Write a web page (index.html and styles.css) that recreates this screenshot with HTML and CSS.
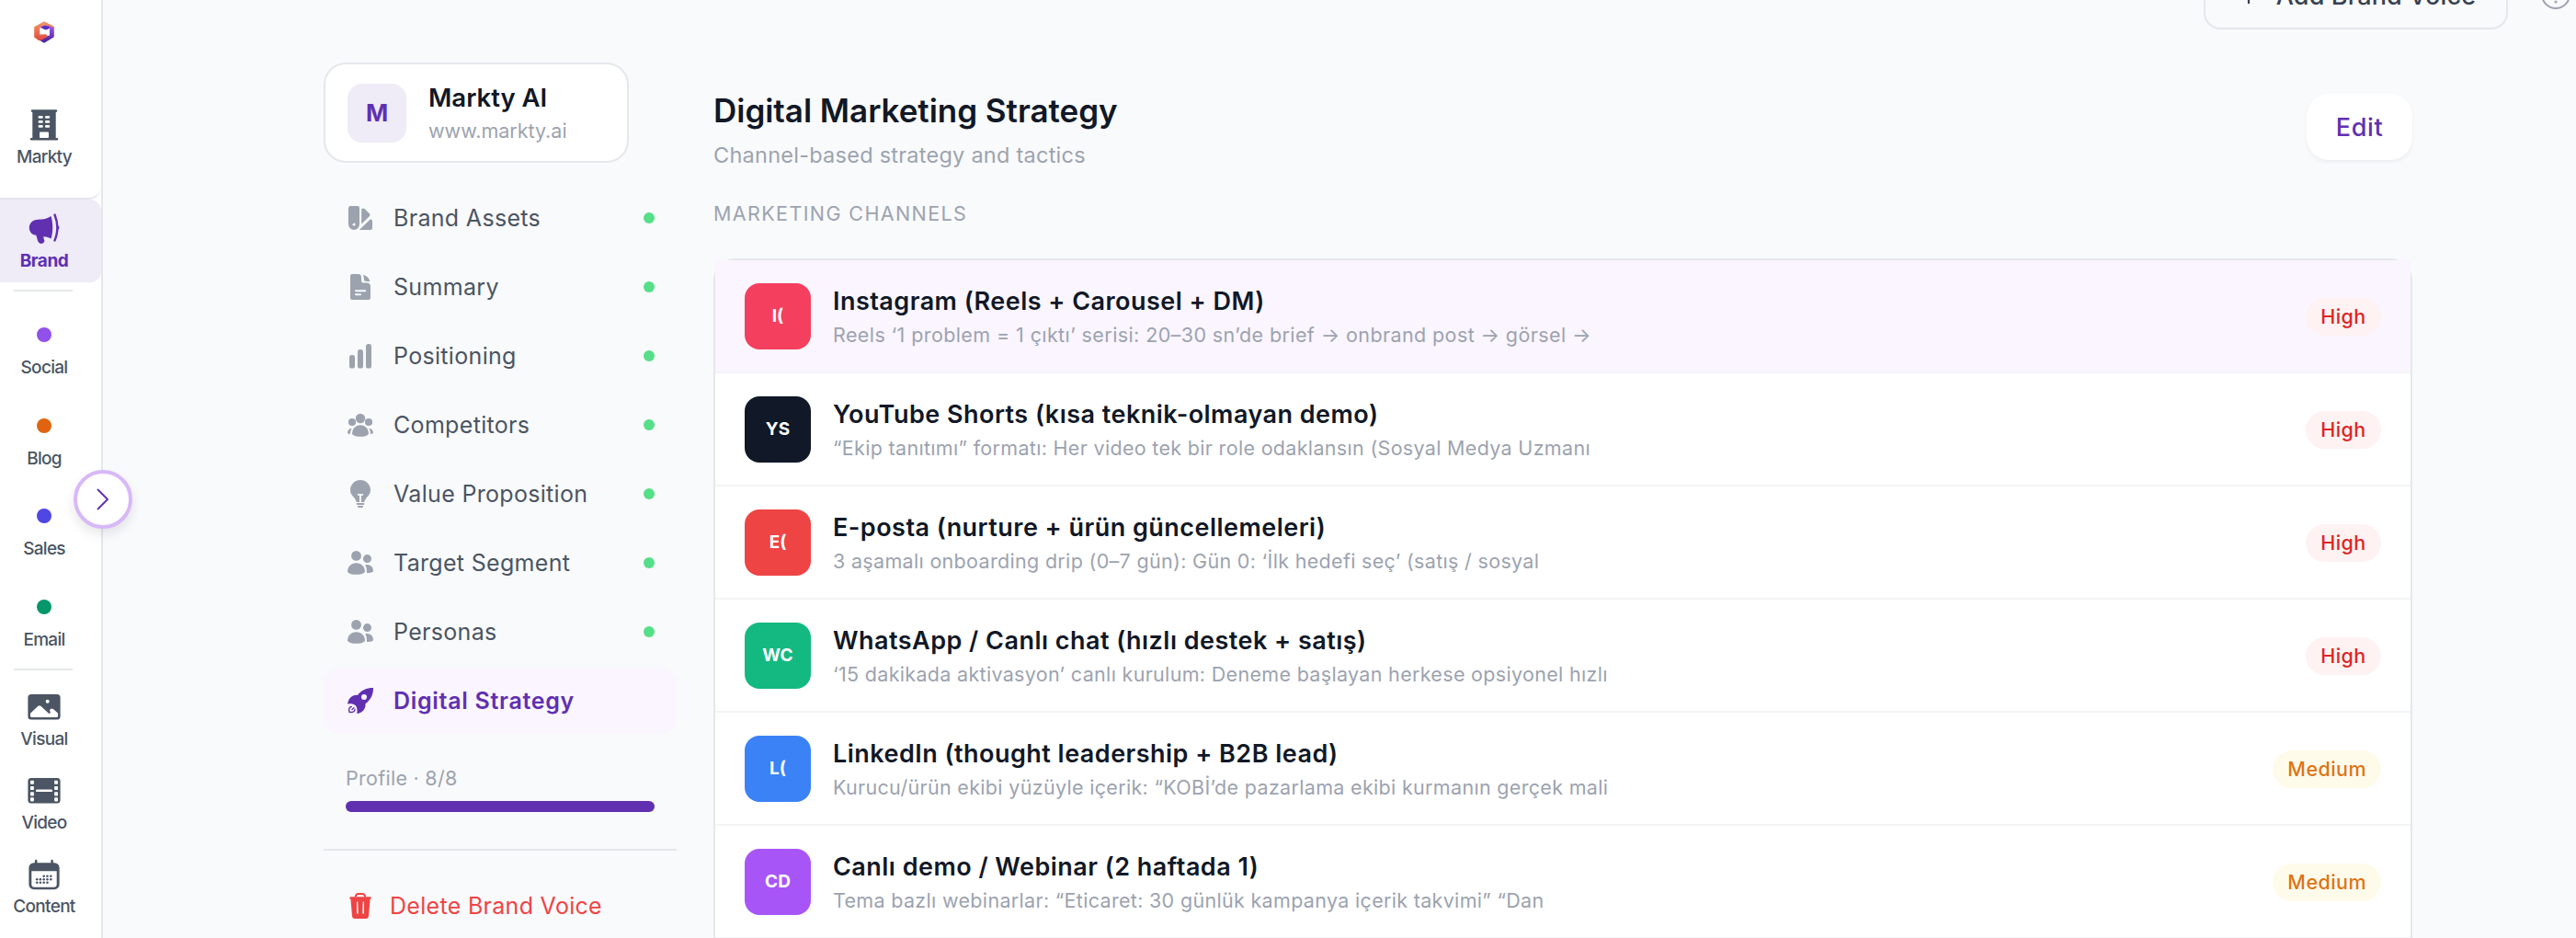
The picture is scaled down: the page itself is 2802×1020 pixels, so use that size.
FILE: index.html
```
<!DOCTYPE html>
<html lang="en">
<head>
<meta charset="utf-8">
<title>Markty – Digital Marketing Strategy</title>
<link rel="stylesheet" href="styles.css">
</head>
<body>
<div class="app">
  <nav class="rail">
    <div class="rail-head">
      <svg class="logo" width="24" height="26" viewBox="0 0 24 26">
        <defs>
          <linearGradient id="warm" x1="0" y1="0" x2="0" y2="1"><stop offset="0" stop-color="#ee9a6a"/><stop offset="1" stop-color="#e2493f"/></linearGradient>
          <linearGradient id="cool" x1="0" y1="0" x2="0" y2="1"><stop offset="0" stop-color="#a45cf5"/><stop offset="1" stop-color="#43208f"/></linearGradient>
        </defs>
        <path d="M20 5.5L22.8 7.2V18.2L12 24.8L6.5 21.5L12 18.5L17.5 16V9L12 10L7.5 7.500Z" fill="url(#cool)"/>
        <path d="M7 8.500L13 11L17.800 8.500V17L12.500 15L7 17.500Z" fill="#fff"/>
        <path d="M12 1.200L21.800 6.200V8L18.500 7L12 5.500L7.300 8.500V15.500L14 15.200L16 17.500L9.500 21.500L6 22L1.200 18.500V7.200Z" fill="url(#warm)"/>
        <path d="M8 7.500L12.500 5.600L18.500 7L16.500 9.800L13.500 10.500Z" fill="#5b2fc0"/>
      </svg>
      <a class="rail-item">
        <svg width="32" height="36" viewBox="0 0 32 36"><path fill="currentColor" fill-rule="evenodd" d="M3 1.300H29a1 1 0 0 1 0 2.600H28.700V31.900H30a1.200 1.200 0 0 1 0 2.600H2a1.200 1.200 0 0 1 0-2.600H3.300V3.900H3a1 1 0 0 1 0-2.600ZM11 26.500V31a1 1 0 0 0 1 1H20a1 1 0 0 0 1-1V26.500a1 1 0 0 0-1-1H12a1 1 0 0 0-1 1Z"/><g fill="#fff"><rect x="9.600" y="8" width="5.200" height="2.700" rx="1.300"/><rect x="17" y="8" width="5.200" height="2.700" rx="1.300"/><rect x="9.600" y="13" width="5.200" height="2.700" rx="1.300"/><rect x="17" y="13" width="5.200" height="2.700" rx="1.300"/><rect x="9.600" y="18" width="5.200" height="2.700" rx="1.300"/><rect x="17" y="18" width="5.200" height="2.700" rx="1.300"/></g></svg>
        <span>Markty</span>
      </a>
    </div>
    <a class="rail-item rail-active">
      <svg width="36" height="36" viewBox="0 0 36 36"><path fill="currentColor" d="M25.500 4C21.500 7 17 7.700 11.500 7.700C5.500 7.700 1.800 12 1.800 16.500C1.800 21 4.800 24.300 9.300 24.800L11 30.500C11.900 34.800 17.200 35 18.300 31.500C18.700 29.800 17 28.800 17.500 26.200C20.500 26.200 23.500 27.200 25.600 28.600C27.800 21 27.800 11 25.500 4Z"/><path d="M29.500 2.500C33.200 11.500 33.200 21.500 29.500 30.500" fill="none" stroke="currentColor" stroke-width="2.400" stroke-linecap="round"/><path d="M32 13.500Q34.500 14.300 34.500 16.500T32 19.500Z" fill="currentColor"/></svg>
      <span>Brand</span>
    </a>
    <hr class="rail-rule">
    <div class="rail-dots">
      <a class="rail-item"><i class="dot dot-social"></i><span>Social</span></a>
      <a class="rail-item"><i class="dot dot-blog"></i><span>Blog</span></a>
      <a class="rail-item"><i class="dot dot-sales"></i><span>Sales</span></a>
      <a class="rail-item"><i class="dot dot-email"></i><span>Email</span></a>
    </div>
    <hr class="rail-rule">
    <div class="rail-tools">
      <a class="rail-item">
        <svg width="36" height="30" viewBox="0 0 36 30"><rect x=".4" y="1" width="35.200" height="27.600" rx="3.500" fill="currentColor"/><path fill="#fff" d="M3 24.500V21.800L11.400 13.800Q12.900 12.500 14.400 13.800L23 21.700Q25.200 22.400 24.800 20L23.900 18.800Q25.300 15.300 28.200 17.300L33 21.600V24.500Q33 26 31.500 26H4.500Q3 26 3 24.500Z"/><circle cx="21.700" cy="8.700" r="2" fill="#fff"/></svg>
        <span>Visual</span>
      </a>
      <a class="rail-item">
        <svg width="36" height="30" viewBox="0 0 36 30"><rect x=".4" y="1" width="35.200" height="27.600" rx="3.500" fill="currentColor"/><g fill="#fff"><rect x="3" y="3.700" width="3.900" height="4.100" rx=".8"/><rect x="3" y="10" width="3.900" height="4.100" rx=".8"/><rect x="3" y="16.300" width="3.900" height="4.100" rx=".8"/><rect x="3" y="22.300" width="3.900" height="4.100" rx=".8"/><rect x="29.100" y="3.700" width="3.900" height="4.100" rx=".8"/><rect x="29.100" y="10" width="3.900" height="4.100" rx=".8"/><rect x="29.100" y="16.300" width="3.900" height="4.100" rx=".8"/><rect x="29.100" y="22.300" width="3.900" height="4.100" rx=".8"/><rect x="9" y="13.600" width="18" height="2.500" rx="1.200"/></g></svg>
        <span>Video</span>
      </a>
      <a class="rail-item rail-content">
        <svg width="36" height="35" viewBox="0 0 36 35"><rect x="1.400" y="4.200" width="33.200" height="29" rx="5.500" fill="currentColor"/><path d="M9.200 2V6M26.600 2V6" stroke="currentColor" stroke-width="2.500" stroke-linecap="round"/><path fill="#fff" d="M4.300 13.300H31.700V27.500Q31.700 30.700 28.500 30.700H7.500Q4.300 30.700 4.300 27.500Z"/><g fill="currentColor"><circle cx="17.700" cy="18.700" r="1.300"/><circle cx="21.500" cy="18.700" r="1.300"/><circle cx="25.300" cy="18.700" r="1.300"/><circle cx="10.200" cy="22.200" r="1.300"/><circle cx="13.900" cy="22.200" r="1.300"/><circle cx="17.700" cy="22.200" r="1.300"/><circle cx="21.500" cy="22.200" r="1.300"/><circle cx="25.300" cy="22.200" r="1.300"/><circle cx="10.200" cy="25.800" r="1.300"/><circle cx="13.900" cy="25.800" r="1.300"/><circle cx="17.700" cy="25.800" r="1.300"/><circle cx="21.500" cy="25.800" r="1.300"/></g></svg>
        <span>Content</span>
      </a>
    </div>
    <button class="rail-toggle" aria-label="Expand menu"><svg width="14" height="24" viewBox="0 0 14 24"><path d="M1.500 1.500L12 12L1.500 22.500" fill="none" stroke="#6030b1" stroke-width="1.900" stroke-linecap="round" stroke-linejoin="round"/></svg></button>
  </nav>

  <div class="page">
    <header class="topbar">
      <button class="add-voice"><svg width="16" height="20" viewBox="0 0 16 20"><path d="M8 1V19M-1 10H17" stroke="currentColor" stroke-width="2.200"/></svg>Add Brand Voice</button>
      <svg class="help" width="32" height="32" viewBox="0 0 32 32" fill="none" stroke="#9ca3af" stroke-width="2"><circle cx="16" cy="16" r="15"/><path d="M12 12.500Q12 8.500 16 8.500T20 12.500C20 15.500 16 15 16 18.500"/><circle cx="16" cy="24" r=".6"/></svg>
    </header>

    <div class="columns">
      <aside class="side">
        <div class="brand-card">
          <div class="brand-letter">M</div>
          <div class="brand-text"><strong>Markty AI</strong><span>www.markty.ai</span></div>
        </div>
        <ul class="menu">
          <li><svg viewBox="0 0 28 28"><path fill-rule="evenodd" d="M3 1H11Q13 1 13 3V21A6 6 0 0 1 1 21V3Q1 1 3 1ZM7 19.200L7.800 20.300L9.100 20.800L8 21.700L7.500 23L6.400 22.100L5 22L5.800 20.800Z"/><path d="M15.200 4.600Q17 2.700 18.800 4.300L24 9.400Q25 10.700 24 11.900L15.200 20.800Z"/><path d="M12.800 27L24.500 15.700Q27 15 27 17.500V25Q27 27 25 27Z"/></svg><span>Brand Assets</span></li>
          <li><svg viewBox="0 0 28 28"><path fill-rule="evenodd" d="M5 0H12.500Q15 .5 15 3.500V7Q15 9.600 18 9.600H21Q25 9.800 25 14V26Q25 28 23 28H5Q3 28 3 26V2Q3 0 5 0ZM9 17.200a1 1 0 0 0 0 2H19.200a1 1 0 0 0 0-2ZM9 21.200a1 1 0 0 0 0 2H14a1 1 0 0 0 0-2Z"/><path d="M16.800 1C20.500 1.300 23.500 4.300 24.500 8.200C22 7.500 20.500 8.500 18 7.200C18 5 17.800 2.500 16.800 1Z"/></svg><span>Summary</span></li>
          <li><svg viewBox="0 0 28 28"><rect x="2" y="13" width="6" height="14.500" rx="2.600"/><rect x="11" y="7" width="6" height="20.500" rx="2.600"/><rect x="20" y="1" width="6" height="26.500" rx="2.600"/></svg><span>Positioning</span></li>
          <li><svg viewBox="0 0 28 28"><circle cx="14" cy="7" r="5.200"/><circle cx="5" cy="11" r="4.100"/><circle cx="23" cy="11" r="4.100"/><path d="M5 24C5 18 9 14.200 14 14.200S23 18 23 24C20 27.800 8 27.800 5 24Z"/><path d="M4.500 18C1.200 18 0 20.500 0 23.300L3 24Q3 20.500 4.500 18ZM23.500 18C26.800 18 28 20.500 28 23.300L25 24Q25 20.500 23.500 18Z"/></svg><span>Competitors</span></li>
          <li><svg viewBox="0 0 28 28"><path fill-rule="evenodd" d="M14-1A11 11 0 0 1 25 10C25 16 19.500 17.500 18.300 23H15V15.700H17V14H11V15.700H13V23H9.700C8.500 17.500 3 16 3 10A11 11 0 0 1 14-1Z"/><rect x="9.700" y="23.900" width="8.600" height="2" rx=".8"/><rect x="11" y="27" width="6" height="2" rx=".9"/></svg><span>Value Proposition</span></li>
          <li><svg viewBox="0 0 28 28"><circle cx="9.500" cy="6.400" r="5.400"/><circle cx="21.500" cy="9.600" r="4.500"/><path d="M0 24C0 18 4 14.200 9.500 14.200S19 18 19 24C16 27.800 3 27.800 0 24Z"/><path d="M19.300 16.200C25 15.500 28 18.500 28 23.500Q25.500 25.200 21 25Q21.500 20 19.300 16.200Z"/></svg><span>Target Segment</span></li>
          <li><svg viewBox="0 0 28 28"><circle cx="9.500" cy="6.400" r="5.400"/><circle cx="21.500" cy="9.600" r="4.500"/><path d="M0 24C0 18 4 14.200 9.500 14.200S19 18 19 24C16 27.800 3 27.800 0 24Z"/><path d="M19.300 16.200C25 15.500 28 18.500 28 23.500Q25.500 25.200 21 25Q21.500 20 19.300 16.200Z"/></svg><span>Personas</span></li>
          <li class="current"><svg viewBox="0 0 28 28"><path fill-rule="evenodd" d="M28 0C20.500 0 15 2.500 11 8C5 7 1 12 0 17.500C3 17 6.500 17 8.500 19C10.500 21 10.800 24 10.300 28C15.500 27.500 20 23.500 19.500 17.300C25 13 28 8 28 0ZM18 7a3 3 0 1 0 0 6a3 3 0 1 0 0-6Z"/><path d="M4.300 20.500C1.800 21 1 23.500 2 26.300C5.500 26.800 7.800 26 8 23.500M5 23.500L7 21.800" fill="none" stroke="currentColor" stroke-width="1.400" stroke-linecap="round"/></svg><span>Digital Strategy</span></li>
        </ul>
        <div class="progress">
          <span>Profile · 8/8</span>
          <div class="track"><div class="fill" style="width:100%"></div></div>
        </div>
        <a class="delete"><svg viewBox="0 0 28 28"><path fill-rule="evenodd" d="M3 4.200H25Q26 4.200 25.600 6.500H24.600L23 25Q22.800 28 20 28H8Q5.200 28 5 25L3.400 6.500H2.400Q2 4.200 3 4.200ZM10 9.500V22.500H11.700L11.300 9.500ZM16.700 9.500L16.300 22.500H18V9.500Z"/><path d="M8.700 4.500Q9 1 12 1H16Q19 1 19.300 4.500" fill="none" stroke="currentColor" stroke-width="1.800"/></svg>Delete Brand Voice</a>
      </aside>

      <main class="main">
        <div class="main-head">
          <div><h1>Digital Marketing Strategy</h1><p>Channel-based strategy and tactics</p></div>
          <button class="edit">Edit</button>
        </div>
        <h2>MARKETING CHANNELS</h2>
        <div class="channels">
          <div class="row hover"><div class="avatar rose">I(</div><div class="info"><h3>Instagram (Reels + Carousel + DM)</h3><p>Reels ‘1 problem = 1 çıktı’ serisi: 20–30 sn’de brief → onbrand post → görsel →</p></div><span class="badge high">High</span></div>
          <div class="row"><div class="avatar ink">YS</div><div class="info"><h3>YouTube Shorts (kısa teknik-olmayan demo)</h3><p>“Ekip tanıtımı” formatı: Her video tek bir role odaklansın (Sosyal Medya Uzmanı</p></div><span class="badge high">High</span></div>
          <div class="row"><div class="avatar red">E(</div><div class="info"><h3>E-posta (nurture + ürün güncellemeleri)</h3><p>3 aşamalı onboarding drip (0–7 gün): Gün 0: ‘İlk hedefi seç’ (satış / sosyal</p></div><span class="badge high">High</span></div>
          <div class="row"><div class="avatar green">WC</div><div class="info"><h3>WhatsApp / Canlı chat (hızlı destek + satış)</h3><p>‘15 dakikada aktivasyon’ canlı kurulum: Deneme başlayan herkese opsiyonel hızlı</p></div><span class="badge high">High</span></div>
          <div class="row"><div class="avatar blue">L(</div><div class="info"><h3>LinkedIn (thought leadership + B2B lead)</h3><p>Kurucu/ürün ekibi yüzüyle içerik: “KOBİ’de pazarlama ekibi kurmanın gerçek mali</p></div><span class="badge medium">Medium</span></div>
          <div class="row"><div class="avatar purple">CD</div><div class="info"><h3>Canlı demo / Webinar (2 haftada 1)</h3><p>Tema bazlı webinarlar: “Eticaret: 30 günlük kampanya içerik takvimi” “Dan</p></div><span class="badge medium">Medium</span></div>
        </div>
      </main>
    </div>
  </div>
</div>
</body>
</html>
```
FILE: styles.css
```
* { box-sizing: border-box; margin: 0; padding: 0; }
html, body { height: 100%; overflow: hidden; }
body { background: #f9fafc; font-family: Inter, "Liberation Sans", sans-serif; color: #111827; }
button { font: inherit; background: none; border: 0; }
svg { display: block; flex: none; overflow: visible; }
.app { display: flex; height: 1020px; }

.rail { position: relative; width: 112px; flex: none; background: #fff; border-right: 2px solid #e5e7eb; }
.rail-head { height: 217px; padding-top: 22px; border-bottom: 2px solid #e5e4ee; border-bottom-right-radius: 14px; }
.logo { margin: 0 0 70px 36px; }
.rail-item { display: flex; flex-direction: column; align-items: center; width: 96px; color: #4b5563; font-size: 19px; line-height: 24px; font-weight: 500; letter-spacing: -.7px; }
.rail-head .rail-item { gap: 5px; }
.rail-active { width: 110px; height: 90px; padding: 14px 14px 0 0; gap: 5px; background: #efebf7; border-radius: 0 12px 12px 0; color: #6030b1; font-weight: 700; letter-spacing: -.5px; }
.rail-rule { width: 64px; height: 2px; margin: 8px 0 0 15px; border: 0; background: #e5e7eb; }
.rail-dots { display: flex; flex-direction: column; gap: 42.700px; margin-top: 39px; }
.rail-dots .rail-item { gap: 16px; }
.rail-dots + .rail-rule { margin-top: 19px; }
.dot { width: 16px; height: 16px; border-radius: 50%; }
.dot-social { background: #9150ea; }
.dot-blog { background: #e0640f; }
.dot-sales { background: #4f46e5; }
.dot-email { background: #059669; }
.rail-tools { display: flex; flex-direction: column; gap: 29px; margin-top: 25px; }
.rail-tools .rail-item { gap: 8px; }
.rail-tools .rail-content { gap: 5px; margin-top: -2px; }
.rail-toggle { position: absolute; left: 80px; top: 511px; width: 64px; height: 64px; display: flex; align-items: center; justify-content: center; background: #fff; border: 4px solid #d8b8f8; border-radius: 50%; box-shadow: 0 6px 12px rgba(17, 24, 39, .1); }

.page { flex: 1; min-width: 0; }
.topbar { display: flex; justify-content: flex-end; align-items: center; gap: 36px; height: 76px; margin-top: -44px; padding-right: 6px; }
.add-voice { display: flex; align-items: center; justify-content: center; gap: 22px; width: 331px; height: 76px; padding: 2px 0 0 6px; border: 2px solid #e5e7eb; border-radius: 18px; color: #374151; font-size: 27px; font-weight: 500; letter-spacing: .15px; }

.columns { display: flex; gap: 40px; padding: 36px 178px 0 240px; }
.side { width: 384px; flex: none; }
.brand-card { display: flex; align-items: center; gap: 24px; width: 332px; height: 109px; padding-left: 24px; background: #fff; border: 2px solid #e5e7eb; border-radius: 24px; }
.brand-letter { width: 64px; height: 64px; border-radius: 16px; background: #efebf7; color: #6030b1; font-size: 26px; font-weight: 700; line-height: 64px; text-align: center; }
.brand-text { display: flex; flex-direction: column; line-height: 36px; padding-top: 2px; }
.brand-text strong { font-size: 27.500px; font-weight: 600; }
.brand-text span { font-size: 21.500px; color: #9ca3af; }
.menu { list-style: none; display: flex; flex-direction: column; gap: 3px; margin-top: 24px; }
.menu li { display: flex; align-items: center; gap: 22px; height: 72px; padding: 0 24px 0 26px; border-radius: 18px; font-size: 25px; letter-spacing: .32px; color: #4b5563; }
.menu svg, .delete svg { width: 28px; height: 28px; fill: #9ca3af; }
.menu span { flex: 1; }
.menu li::after { content: ""; width: 12px; height: 12px; border-radius: 50%; background: #55df88; }
.menu .current { background: #faf5ff; color: #6030b1; font-weight: 600; letter-spacing: .7px; }
.menu .current svg { fill: currentColor; }
.menu .current::after { display: none; }
.progress { margin-top: 33px; padding: 0 24px; }
.progress span { display: block; font-size: 21.500px; line-height: 30px; letter-spacing: .28px; color: #9ca3af; }
.track { height: 12px; margin-top: 9.500px; border-radius: 6px; background: #e5e7eb; }
.fill { height: 12px; border-radius: 6px; background: #6030b1; }
.delete { display: flex; align-items: center; gap: 18px; margin-top: 40px; padding: 46px 0 0 26px; border-top: 2px solid #e5e7eb; color: #ef4444; font-size: 25px; line-height: 28px; letter-spacing: .3px; }
.delete svg { fill: currentColor; }

.main { flex: 1; min-width: 0; padding-top: 30px; }
.main-head { display: flex; justify-content: space-between; align-items: flex-start; height: 120px; }
h1 { font-size: 35px; line-height: 44px; font-weight: 600; letter-spacing: -.03px; }
.main-head p { margin-top: 11px; font-size: 23.500px; line-height: 32px; letter-spacing: .25px; color: #9ca3af; }
.edit { width: 115px; height: 72px; margin-top: 4px; border-radius: 24px; background: #fff; box-shadow: 0 2px 4px rgba(17, 24, 39, .06); color: #6030b1; font-size: 27px; font-weight: 500; letter-spacing: .6px; }
h2 { height: 63px; font-size: 21.500px; line-height: 28px; font-weight: 400; letter-spacing: 1.390px; color: #9ca3af; }
.channels { height: 860px; background: #fff; border: 2px solid #e5e7eb; border-radius: 24px; }
.row { display: flex; align-items: center; height: 123px; padding: 1px 32px 0; border-bottom: 2px solid #f3f4f6; }
.hover { background: #faf5ff; }
.avatar { width: 72px; height: 72px; border-radius: 16px; color: #fff; font-size: 19px; font-weight: 700; line-height: 72px; text-align: center; }
.rose { background: #f43f5e; }
.ink { background: #111827; }
.red { background: #ef4444; }
.green { background: #14b981; }
.blue { background: #3b82f6; }
.purple { background: #a855f7; }
.info { flex: 1; padding: 3px 0 0 24px; }
.info h3 { font-size: 27px; line-height: 36px; font-weight: 600; letter-spacing: .47px; }
.info p { font-size: 21.500px; line-height: 36px; letter-spacing: .32px; color: #9ca3af; }
.hover .info p { letter-spacing: .4px; }
.badge { min-width: 82px; padding: 0 16px; border-radius: 21px; font-size: 21.500px; line-height: 41px; font-weight: 500; letter-spacing: .45px; text-align: center; }
.high { background: #fef2f2; color: #dc2626; }
.medium { background: #fffbeb; color: #dd7415; }
```
